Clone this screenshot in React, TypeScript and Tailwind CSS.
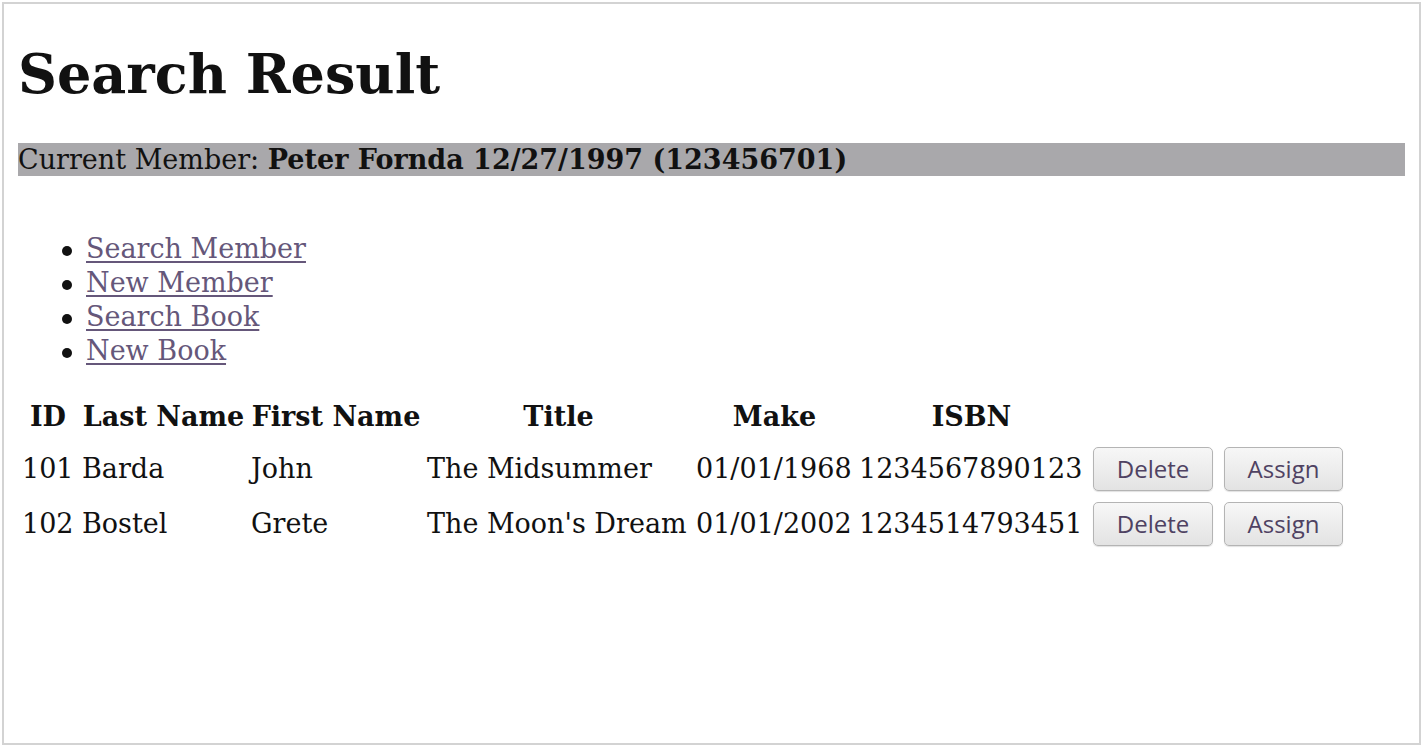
const rows = [
  { id: "101", last: "Barda", first: "John", title: "The Midsummer", make: "01/01/1968", isbn: "1234567890123" },
  { id: "102", last: "Bostel", first: "Grete", title: "The Moon's Dream", make: "01/01/2002", isbn: "1234514793451" },
]

const links = ["Search Member", "New Member", "Search Book", "New Book"]

const gridCols = "grid grid-cols-[56px_163px_170px_263px_157px_225px_260px] gap-x-[6px] pl-[2px]"

function ActionButton({ label, width }: { label: string; width: string }) {
  return (
    <button
      className={`${width} h-[44px] rounded-[5px] border border-[#b4b4b4] bg-gradient-to-b from-[#f7f7f7] to-[#e3e3e3] text-[24px] leading-none text-[#4f4262] shadow-[0_1px_1px_rgba(0,0,0,0.12)] font-['Open_Sans',sans-serif]`}
    >
      {label}
    </button>
  )
}

export default function App() {
  return (
    <div className="w-[1423px] h-[747px] bg-white p-[2px]">
      <div className="h-full border-2 border-[#d3d3d3] px-[14px] font-['DejaVu_Serif',serif] text-[#111]">
        {/* Heading */}
        <h1 className="mt-[39px] text-[54px] leading-[62px] font-bold">Search Result</h1>

        {/* Current member bar */}
        <div className="mt-[38px] h-[33px] bg-[#a9a8ab] text-[27px] leading-[33px]">
          Current Member: <b>Peter Fornda 12/27/1997 (123456701)</b>
        </div>

        {/* Nav links */}
        <ul className="mt-[56px] pl-[44px] text-[27px] leading-[34px]">
          {links.map((l) => (
            <li key={l} className="flex items-center">
              <span className="mt-[3px] mr-[14px] h-[10px] w-[10px] rounded-full bg-[#111]" />
              <a href="#" className="text-[#65577a] underline underline-offset-[3px]">
                {l}
              </a>
            </li>
          ))}
        </ul>

        {/* Results table */}
        <div className="text-[27px] leading-[34px]">
          <div className={`${gridCols} mt-[32px] h-[34px] font-bold text-center`}>
            <div>ID</div>
            <div>Last Name</div>
            <div className="whitespace-nowrap">First Name</div>
            <div>Title</div>
            <div>Make</div>
            <div>ISBN</div>
            <div />
          </div>
          <div className="mt-[13px] flex flex-col gap-[11px]">
            {rows.map((r) => (
              <div key={r.id} className={`${gridCols} h-[44px] items-center`}>
                <div className="pl-[2px]">{r.id}</div>
                <div>{r.last}</div>
                <div>{r.first}</div>
                <div className="whitespace-nowrap">{r.title}</div>
                <div>{r.make}</div>
                <div>{r.isbn}</div>
                <div className="flex gap-[11px] pl-[3px]">
                  <ActionButton label="Delete" width="w-[120px]" />
                  <ActionButton label="Assign" width="w-[119px]" />
                </div>
              </div>
            ))}
          </div>
        </div>
      </div>
    </div>
  )
}
